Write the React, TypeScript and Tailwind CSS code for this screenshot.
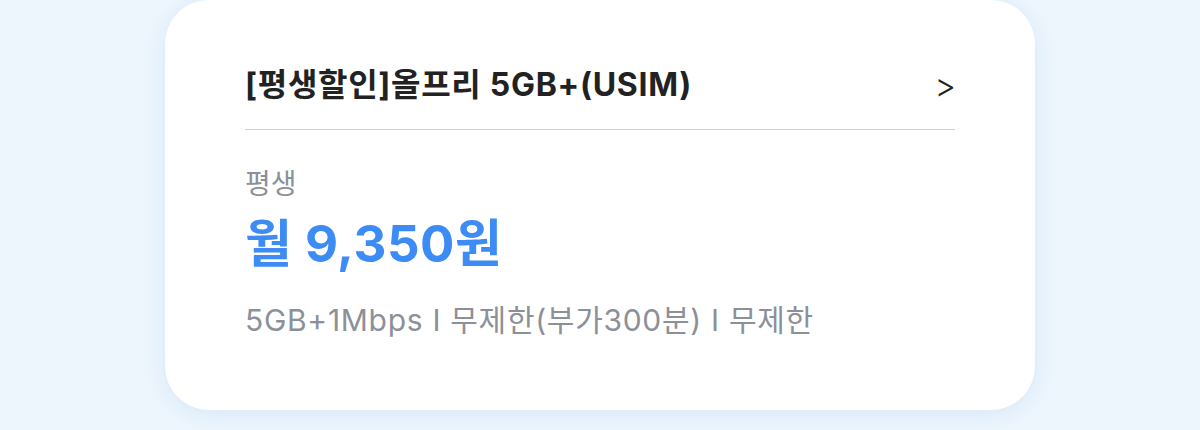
import React from "react";

export default function App() {
  return (
    <div
      className="w-[1200px] h-[430px] bg-[#eef6fd] flex justify-center overflow-hidden"
      style={{ fontFamily: '"Inter", "Noto Sans CJK KR", sans-serif' }}
    >
      <div className="w-[870px] h-[410px] bg-white rounded-[44px] shadow-[0_4px_24px_rgba(170,205,240,0.35)] px-[80px] pt-[65px] flex flex-col">
        <div className="flex items-center justify-between border-b border-[#cfcfcf] pb-[24px]">
          <span className="text-[32px] leading-[40px] font-bold text-[#222] tracking-[0.7px]">
            [평생할인]올프리 5GB+(USIM)
          </span>
          <span className="text-[33px] leading-[40px] font-light text-[#222] mr-[-1px]">&gt;</span>
        </div>
        <div className="mt-[38px] text-[28px] leading-[32px] text-[#8b9099]">평생</div>
        <div className="mt-[16px] text-[51px] leading-[56px] font-bold text-[#3d8bf4] tracking-[0.5px]">월 9,350원</div>
        <div className="mt-[30px] text-[30px] leading-[36px] text-[#8b9099] tracking-[0.7px]">
          5GB+1Mbps I 무제한(부가300분) I 무제한
        </div>
      </div>
    </div>
  );
}
